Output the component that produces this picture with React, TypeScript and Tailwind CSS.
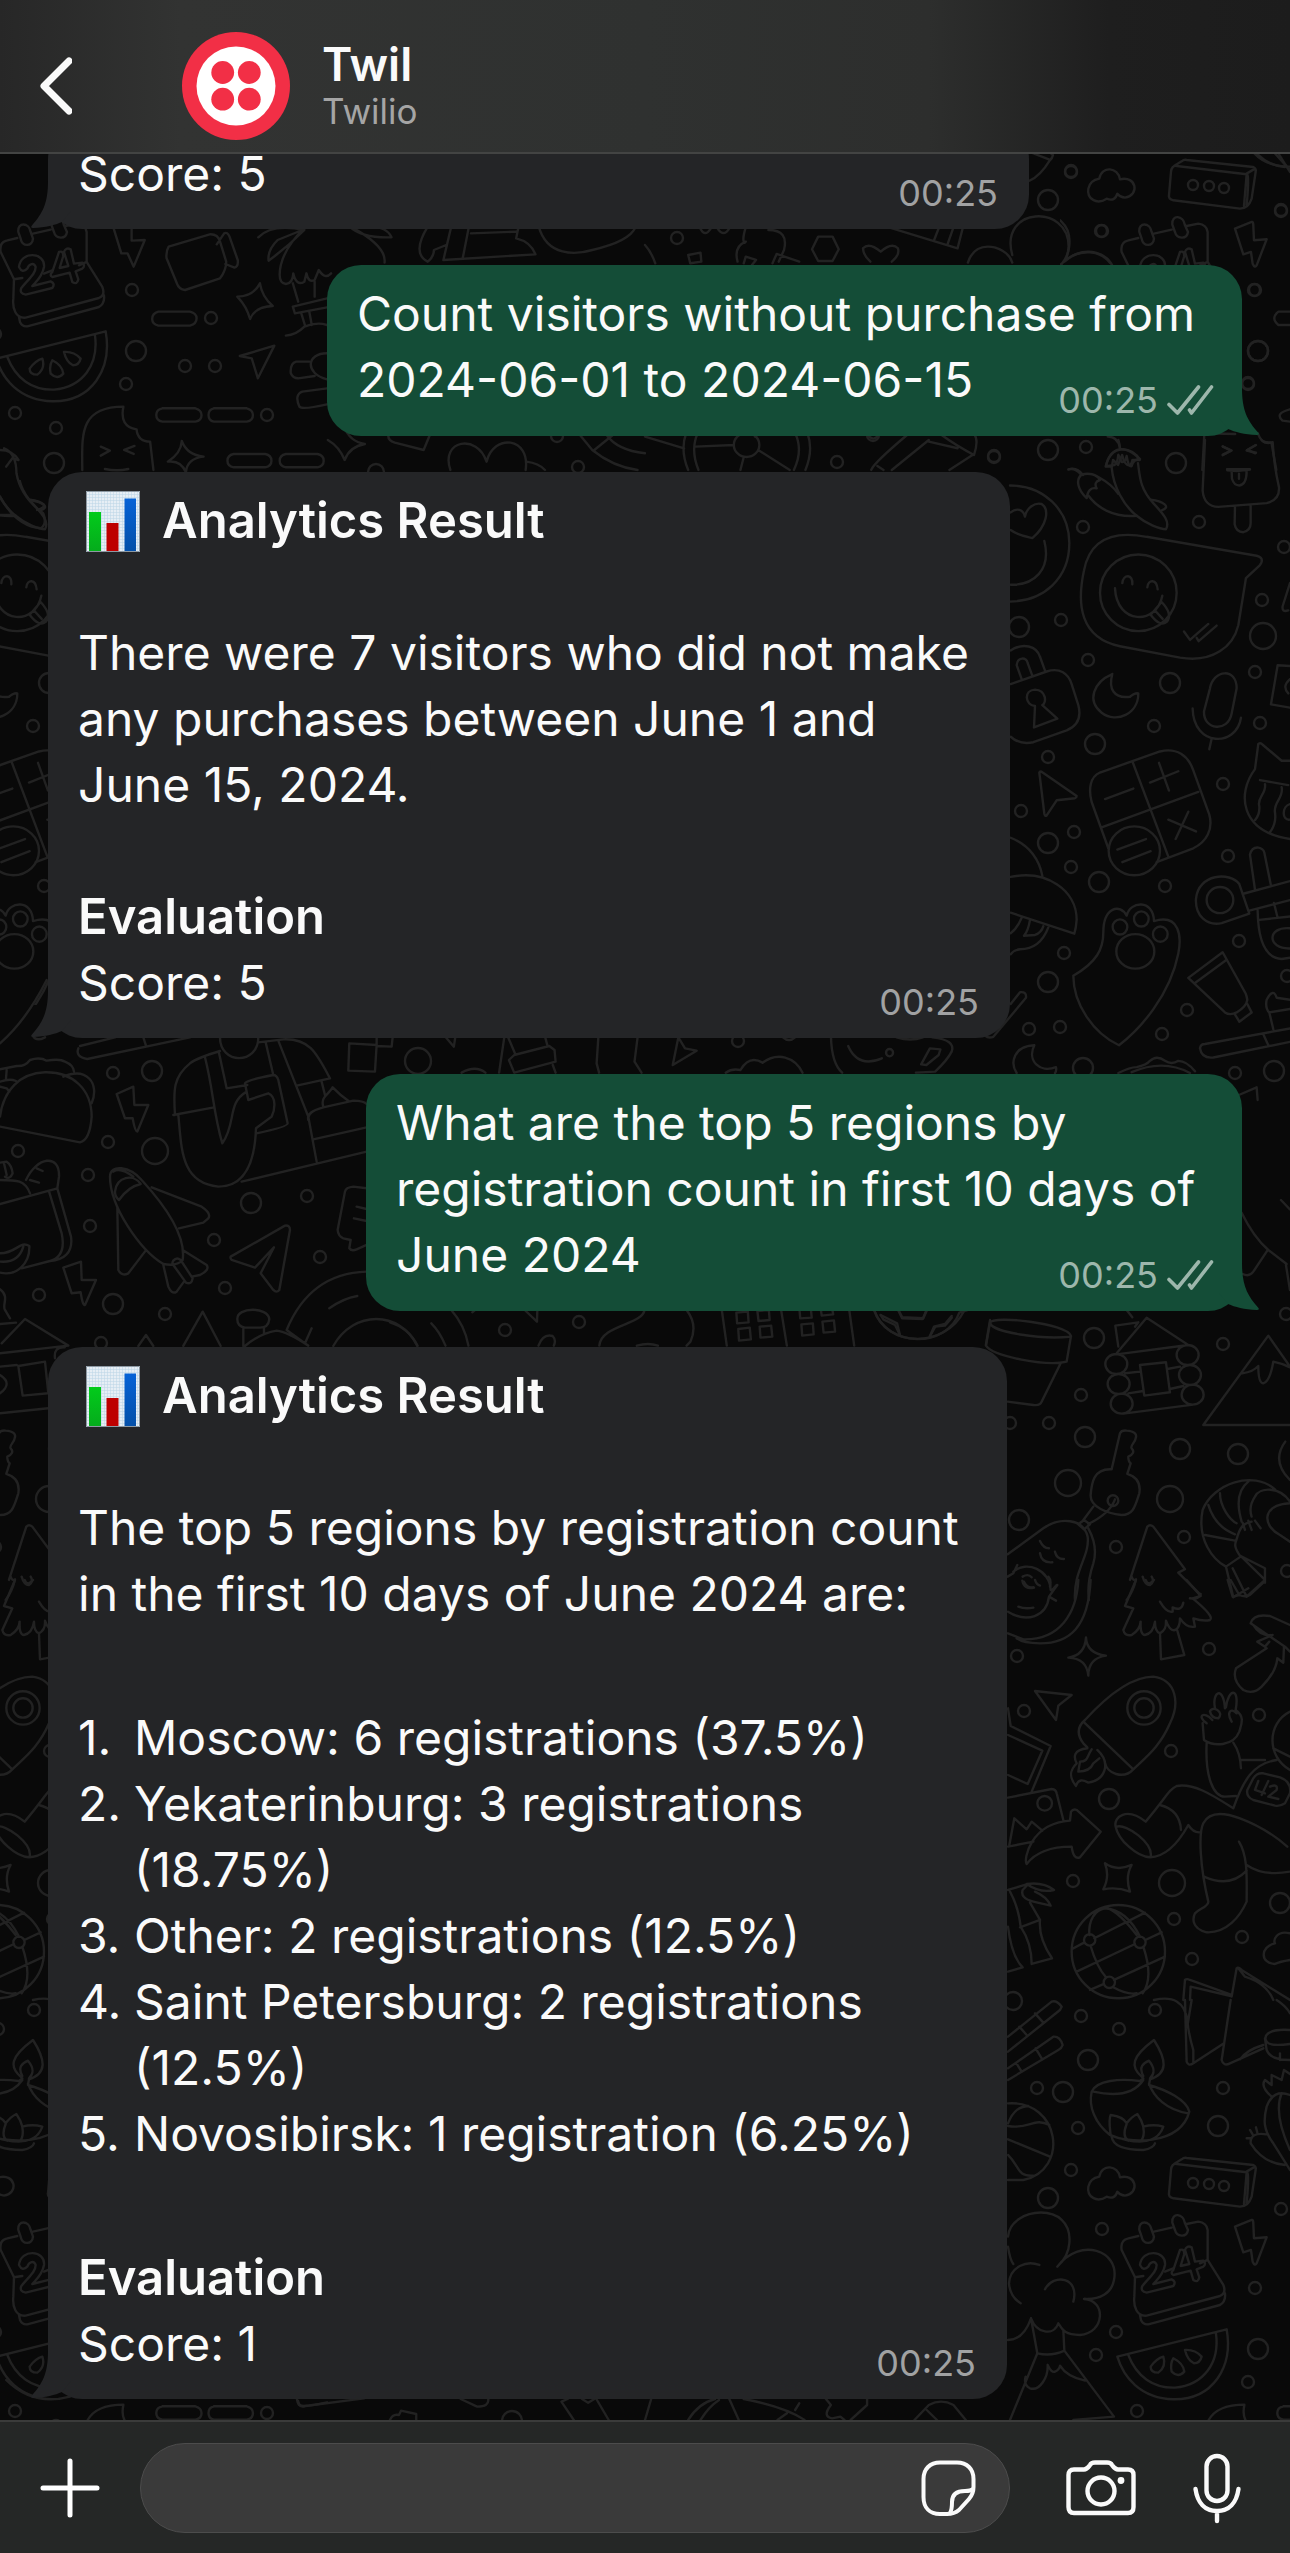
import type { ReactNode } from "react";

type Spot = [number, number, number];

/* ---------- wallpaper ---------- */

const S = "translate(";
const dots: Spot[] = [
  // upper right
  [994, 457, 6], [1048, 450, 10], [1086, 447, 6], [1176, 463, 10], [1083, 527, 6], [1199, 522, 6],
  [1284, 547, 6], [1061, 620, 6], [1019, 627, 10], [1262, 600, 6], [1263, 636, 13], [1088, 660, 6],
  [1170, 683, 10], [1255, 672, 6], [1260, 723, 6], [1154, 726, 6], [1095, 744, 10], [1048, 757, 6],
  [1223, 784, 6], [1021, 811, 6], [1074, 832, 6], [1048, 843, 10], [1071, 867, 6], [1099, 882, 10],
  [1228, 856, 6], [1165, 886, 6], [1064, 953, 6], [1239, 941, 6], [1048, 982, 10], [1287, 976, 6],
  [1187, 1010, 6], [1060, 1027, 6], [1029, 1029, 6], [1162, 1034, 6], [1083, 1068, 10], [1235, 1073, 6],
  [1274, 1071, 10],
  // right, middle
  [1094, 1338, 10], [1081, 1395, 6], [1223, 1344, 6], [1049, 1423, 6], [1010, 1423, 6], [1085, 1437, 10],
  [1180, 1449, 10], [1238, 1454, 10], [1068, 1483, 13], [1170, 1499, 13], [1019, 1520, 10], [1116, 1547, 6],
  [1184, 1537, 6], [1287, 1571, 6], [1017, 1656, 6], [1209, 1649, 6], [1024, 1711, 6], [1259, 1715, 6],
  [1171, 1751, 6], [1109, 1799, 10], [1172, 1883, 13], [1073, 1881, 6], [1174, 1919, 6], [1280, 1903, 10],
  [1242, 1937, 6], [1192, 1959, 6], [1286, 1314, 6],
  // left band
  [113, 1073, 6], [152, 1071, 10], [108, 1142, 6], [155, 1151, 13], [18, 1151, 6], [88, 1175, 6],
  [90, 1226, 6], [251, 1203, 10], [307, 1196, 6], [214, 1240, 6], [320, 1257, 6], [39, 1295, 6],
  [113, 1304, 10], [165, 1314, 6], [225, 1288, 6], [101, 1343, 6], [418, 1061, 13],
  [505, 1330, 6], [579, 1322, 6], [738, 1041, 6], [789, 1032, 8],
  // top bands
  [132, 290, 6], [211, 318, 6], [136, 351, 10], [185, 366, 6], [215, 366, 6], [126, 384, 6], [15, 413, 6],
  [56, 428, 6], [267, 415, 6], [54, 463, 10], [578, 467, 6], [376, 472, 8], [557, 436, 6],
  [677, 238, 6], [837, 462, 6], [873, 435, 6], [994, 456, 6], [1254, 290, 6], [1258, 351, 10],
  [1248, 383, 6], [1281, 210, 6], [1048, 200, 10], [1071, 171, 6], [1101, 231, 6],
  [512, 2421, 10],
];

const lowerDots: Spot[] = [
  [1013, 2001, 9], [1081, 2016, 6], [1155, 2010, 6], [1119, 2029, 6], [1088, 2060, 10], [1037, 2088, 6],
  [1063, 2092, 10], [1223, 2088, 6], [1218, 2126, 10], [1078, 2128, 6], [1071, 2170, 6], [1048, 2198, 10],
  [1281, 2209, 6], [1102, 2229, 6], [1255, 2288, 6], [1116, 2332, 6], [1258, 2349, 10], [1096, 2355, 6],
  [1248, 2382, 6], [1137, 2411, 6], [1193, 2183, 5], [1209, 2184, 5], [1224, 2186, 5],
];

function Spots({ items }: { items: Spot[] }) {
  return (
    <>
      {items.map(([x, y, r], i) => (
        <circle key={i} cx={x} cy={y} r={r} />
      ))}
    </>
  );
}

function Lines({ t, d }: { t: string; d: string[] }) {
  return (
    <g transform={t}>
      {d.map((p, i) => (
        <path key={i} d={p} vectorEffect="non-scaling-stroke" />
      ))}
    </g>
  );
}

const upperRight = [
  "M90 108C190 108 268 165 268 245C268 330 190 383 90 384M92 172C110 160 130 165 135 182C140 160 165 148 185 152C210 165 200 205 157 233C130 228 110 225 92 214M193 240C215 310 160 345 92 344",
  "M415 0Q420 12 420 20M378 62C385 30 410 20 430 22C455 25 465 35 480 45Q460 45 455 62Q445 65 440 38Q435 55 425 52Q422 45 415 35Q412 60 400 60ZM395 65C400 110 430 155 470 180C500 200 540 212 558 212C570 195 555 180 520 150C480 115 480 90 474 55",
  "M265 70Q285 65 303 82M320 138C295 120 285 95 305 82C325 78 350 80 360 95Q340 100 350 115Q325 110 320 138M355 88Q395 105 415 128M325 132C350 160 400 185 470 180M512 142C550 145 575 160 545 167",
  "M675 0L668 120Q672 158 715 159L860 150Q900 142 897 112Q882 60 878 5Q855 8 845 0M765 157L764 200Q768 218 790 219Q812 215 812 198L812 153M728 15L755 25L728 36M828 12L800 25L828 30M742 72L770 74L810 70M755 74L756 92Q762 108 778 108Q800 105 800 74M777 80L777 92",
  "M500 230C400 215 330 235 312 310C290 390 300 470 420 490L600 517C700 530 760 490 775 440Q785 390 798 328L840 297Q855 280 830 275Z",
  "M590 363A115 91 0 1 1 360 363A115 91 0 1 1 590 363M427 340C430 318 460 318 457 343M502 350C505 330 530 330 533 355M405 352C410 440 530 440 547 370M512 415L545 385Q580 415 560 432Q540 445 512 415M525 405L548 425M612 455L630 475L685 437M650 470L656 478L710 441",
  "M92 500C130 480 170 490 180 515L195 548M125 568L110 535C112 515 140 515 143 530L157 560M92 580L200 550C240 540 265 555 275 580L295 630C305 660 290 680 260 690L160 718Q120 725 92 705M165 632C135 630 130 595 165 593C200 595 200 625 187 630L232 662L162 683Z",
  "M397 556C340 575 320 620 365 648C410 675 475 650 475 602Q465 600 450 610C400 615 385 590 397 556",
  "M690 590C700 545 770 540 770 590L755 650C745 695 670 690 672 645ZM638 638C640 730 770 730 783 660M695 710L688 735",
  "M178 790Q180 785 188 790L290 846Q290 850 285 851L230 856L200 892Q195 895 193 888Z",
  "M360 790L540 740C590 730 625 750 640 785L688 890C700 925 680 955 640 970L530 1003M385 970L335 860C325 830 330 800 360 790M458 765L565 990M367 920L655 836M375 853L460 828M510 814L595 787M537 767L567 833M565 902L648 930M625 883L587 948",
  "M540 976A77 58 0 1 1 386 976A77 58 0 1 1 540 976M412 973L498 948M427 1003L512 977",
  "M835 722L825 782C770 840 780 930 930 948M835 722Q842 718 848 724L905 762L930 762M840 808L925 820M855 818C860 840 830 850 838 870Q840 890 825 903M905 825C912 850 880 860 885 885Q890 910 870 932",
  "M930 865C905 870 905 905 930 902M930 340L908 395Q905 410 925 405M930 537L893 535L873 628L930 636M930 568Q905 585 925 602",
  "M92 945Q170 970 187 1035M92 1038C200 1020 290 1070 290 1140Q288 1160 283 1173L92 1123M125 1135Q112 1160 92 1172M150 1140Q145 1165 132 1178L165 1176Q185 1170 190 1155M205 1158Q180 1210 120 1210Q100 1212 92 1222",
  "M280 1273C350 1240 370 1210 370 1170C370 1110 420 1100 440 1130C450 1095 520 1090 522 1143C600 1125 605 1180 595 1220C570 1320 480 1400 417 1438C340 1410 280 1340 280 1273M442 1157A22 18 0 1 1 398 1157A22 18 0 1 1 442 1157M506 1138A22 18 0 1 1 462 1138A22 18 0 1 1 506 1138M563 1174A22 18 0 1 1 519 1174A22 18 0 1 1 563 1174M523 1215A57 41 0 1 1 409 1215A57 41 0 1 1 523 1215",
  "M808 1125L725 1148C680 1155 645 1130 648 1090C655 1030 750 1025 778 1055ZM760 1093A40 31 0 1 1 680 1093A40 31 0 1 1 760 1093M825 1068L810 985Q815 968 832 968Q850 970 853 980L872 1055M790 1078L930 1048M808 1118L930 1093M833 1118Q835 1230 905 1233L930 1230M838 1140L930 1132M882 1100L892 1132M930 1160C860 1155 860 1210 930 1208",
  "M728 1217L625 1278L735 1360Q750 1368 770 1360Q800 1345 802 1330Q800 1320 797 1315ZM645 1290L740 1235M802 1340L815 1360L778 1382L763 1362",
  "M660 1445Q662 1435 675 1435L930 1398M660 1445Q665 1470 700 1467L930 1430M850 1412L865 1438M880 1400L868 1360Q855 1350 860 1330Q880 1300 890 1325L930 1330M868 1360L930 1352",
  "M92 1340L120 1312Q140 1310 138 1325L40 1418Q25 1422 15 1415M163 1438C100 1440 90 1480 110 1504M163 1438C140 1475 180 1505 228 1490Q230 1500 225 1504M415 1504Q450 1490 470 1490Q500 1485 510 1475Q530 1460 555 1475Q575 1485 595 1475Q620 1475 645 1500M455 1502Q550 1470 630 1504M780 1555L830 1538L833 1568",
];

const rightMiddle = [
  "M1145 38Q1180 110 1225 150L1280 192M1263 0L1290 28M1222 152L1180 215Q1168 232 1148 222M1278 195L1290 270",
  "M378 437L390 368C400 345 620 370 633 408L620 485C560 500 400 470 378 437M392 372C400 395 540 420 633 410M602 490L545 605Q540 618 520 615L443 605M42 330C80 445 260 445 298 338M116 332L127 352L190 355L200 332M62 345L70 358L105 375L120 405M275 348L255 372L222 380L210 408M298 338L322 330",
  "M770 460L860 353L985 435L770 463M775 440L766 377L835 367L825 380M802 492A33 30 0 1 1 736 492A33 30 0 1 1 802 492M809 552A33 30 0 1 1 743 552A33 30 0 1 1 809 552M818 611A33 30 0 1 1 752 611A33 30 0 1 1 818 611M1016 465A33 30 0 1 1 950 465A33 30 0 1 1 1016 465M1023 525A33 30 0 1 1 957 525A33 30 0 1 1 1023 525M1031 584A33 30 0 1 1 965 584A33 30 0 1 1 1031 584M840 495L918 487L930 577L853 587ZM795 520L840 515M922 507L960 500M805 580L850 573M930 567L970 558M790 641L1000 614M800 330L817 352",
  "M1290 675H1030L1225 407L1290 500M1147 520Q1180 515 1195 498Q1195 550 1210 550Q1230 545 1240 485Q1265 490 1290 502M1276 725C1250 760 1250 800 1290 840",
  "M755 808L780 700Q785 690 800 692Q835 695 827 715C825 730 810 735 815 745C825 755 818 765 805 770Q805 785 812 790L802 822M755 808C700 805 695 850 692 885C690 920 740 940 785 945C820 945 825 920 838 880Q845 835 802 822M775 902A16 16 0 1 1 743 902A16 16 0 1 1 775 902M765 898Q750 940 685 972M700 920L670 960M655 973L672 960L690 973L672 988Z",
  "M443 1063L550 985C600 950 670 955 683 1010C690 1070 640 1110 645 1200M685 985Q715 1040 700 1090Q680 1150 687 1200M540 1023Q550 1045 567 1045M540 1060Q545 1090 577 1087M585 1055Q590 1078 612 1077M460 1115C500 1080 570 1110 572 1170M472 1095L460 1120L443 1130M488 1130Q505 1120 515 1132M487 1142Q492 1170 522 1163M525 1140Q530 1155 540 1157M575 1172L590 1155",
  "M810 1140L862 980Q870 972 880 980L975 1108L955 1118L1022 1185M815 1130Q820 1145 828 1138Q820 1175 800 1200M848 1130Q855 1155 870 1155Q885 1145 875 1130M1022 1182Q1015 1200 990 1195",
  "M1290 910C1200 915 1210 980 1260 1005L1290 1025M1245 868C1180 810 1060 850 1028 930C1010 1020 1060 1080 1098 1100L1142 1070C1120 1040 1125 1030 1130 1018C1140 980 1150 970 1175 965M1290 905C1260 860 1200 860 1185 890Q1165 920 1175 950M1165 845Q1120 880 1145 965M1080 880C1080 920 1110 960 1130 970M1045 915Q1065 980 1125 1003M1035 1005L1125 1022M1148 968L1155 990M1165 962L1175 990M1185 962L1202 985M1098 1100L1120 1192L1165 1165M1118 1105L1160 1190L1215 1140L1142 1068L1215 1105V1148",
];

const rightLower = [
  "M295 0C290 100 240 180 130 178L84 160M332 0C325 140 270 190 180 190Q130 190 110 175M84 95C140 130 200 110 207 50L228 62M207 50L232 15M210 20Q215 0 205 -10M115 80Q135 88 160 83M132 5Q140 25 160 22",
  "M468 0L435 78L460 85L430 150Q435 170 455 165Q480 150 482 125Q480 165 495 165Q520 160 525 125Q525 155 540 160Q560 150 558 122Q570 155 585 150Q600 145 600 115Q620 145 645 140L640 115Q670 125 690 120Q705 110 638 55L662 48L620 0M540 160L543 238L613 225L592 152M497 0Q505 20 522 0M540 65Q560 100 578 95L578 82Q605 95 610 68",
  "M743 0L758 50L778 45L752 0M778 45Q800 55 815 40L853 5",
  "M318 172Q320 220 378 227Q325 235 325 287Q320 235 265 233Q315 225 318 172ZM165 333L275 345L235 377L228 420Z",
  "M315 420C370 360 450 290 520 290C590 300 600 370 570 430C540 500 500 530 460 568C430 600 380 580 375 548M315 420Q280 450 310 490L322 502M310 425L460 568M542 384A50 50 0 1 1 442 384A50 50 0 1 1 542 384M521 384A29 29 0 1 1 463 384A29 29 0 1 1 521 384M322 505C280 510 280 530 290 550C270 570 265 590 288 618C295 595 310 600 325 608C375 600 395 550 352 510M335 508C320 530 325 545 300 545L295 575Q330 575 340 550L358 535",
  "M84 385L92 438L212 498L155 635M84 465L187 512L143 612L84 585M84 653L215 627Q228 628 230 640L250 720M84 800L160 785M88 795L103 715L140 748L155 725L187 752M216 670A22 22 0 1 1 172 670A22 22 0 1 1 216 670M140 852C130 840 150 730 270 722L273 695Q280 685 290 690L362 755L300 832Q280 840 275 800Q180 800 140 852",
  "M375 850Q410 875 455 855Q435 890 450 935Q410 920 370 928Q390 890 375 850M84 930L145 912L128 930Q120 955 160 965L212 977Q200 950 165 935M140 912Q190 905 222 930Q180 940 140 912M150 968L180 1020L120 1042M90 935Q115 980 122 1040Q155 1090 155 1152L216 1135Q175 1075 180 1020M84 1040Q95 1130 128 1162L84 1175",
  "M555 1115A140 140 0 1 1 275 1115A140 140 0 1 1 555 1115M328 1065C325 1020 345 990 375 985C440 990 470 1050 480 1070M490 1100C510 1160 510 1210 488 1240M332 1098Q350 1160 378 1192M400 1222Q440 1245 470 1240M275 1108L312 1088M343 1075L495 998M290 1175L465 1092M496 1080L545 1057M330 1230L372 1212M402 1200L555 1130M385 985Q420 1000 470 1065M346 1080A17 17 0 1 1 312 1080A17 17 0 1 1 346 1080M497 1087A17 17 0 1 1 463 1087A17 17 0 1 1 497 1087M405 1207A17 17 0 1 1 371 1207A17 17 0 1 1 405 1207",
  "M812 130Q820 100 870 108L930 135M812 130L915 200L930 215M820 135Q840 170 878 165L832 185L855 200L868 185M860 205L768 265Q755 300 790 330Q820 345 845 320C880 285 890 260 892 235L910 248L912 200",
  "M680 430C650 410 670 390 697 420M690 395C695 375 735 395 715 415Q695 415 690 395M705 385C695 335 730 315 735 385M738 382C745 325 780 320 767 390C795 410 785 430 778 455C760 500 700 500 672 480L668 430M755 425C740 400 750 380 770 400M680 490C675 590 700 650 735 650L768 648M760 488C775 510 782 540 783 565M785 540L855 540M930 395C860 430 860 530 930 570M880 505L930 530M760 685C790 600 820 550 890 540M760 685C690 640 640 610 590 618C565 630 560 650 497 725C440 680 400 710 407 740C415 780 470 830 510 832C560 830 600 780 625 735Q640 760 662 757M410 740C440 730 520 790 512 830M540 675Q600 690 603 750",
  "M685 965C660 860 655 760 670 730C690 690 740 700 780 715Q860 745 922 800M777 785C805 830 800 900 800 965C780 1010 740 1060 680 1057C630 1045 640 1010 645 1000C660 985 685 980 685 965M672 890Q750 925 800 872M800 855Q850 890 930 875M802 630L820 595Q830 578 850 580L900 592Q935 605 930 640L915 670Q900 680 885 677L820 660Q798 650 802 630M835 603L825 630L855 640M865 603L845 645M870 620Q895 610 890 630L865 650L895 657",
  "M930 1060C890 1050 880 1080 885 1090C840 1100 840 1150 885 1152Q900 1145 930 1140M610 1260L615 1200Q620 1195 630 1200L755 1245M630 1260L632 1220L752 1248M755 1250L770 1165Q775 1160 785 1170L930 1260M775 1165L795 1190Q860 1210 880 1260",
];

const rightBottom = [
  "M84 110L215 5Q230 0 245 20L240 30L84 155M118 80L140 105M165 40L190 68M84 205L220 110Q240 108 248 135Q245 145 235 150L84 240M108 188L125 215M167 145L185 175",
  "M84 310C240 300 270 510 130 540L84 540M84 370C100 330 120 320 145 318M84 378C150 390 160 350 208 375M84 418L210 470M84 465C120 500 110 530 160 527",
  "M335 275C350 240 420 235 480 243L490 235L485 230C450 200 455 170 522 120C560 180 565 220 510 238L507 255C560 270 620 300 628 335C600 440 440 430 390 405C345 370 325 320 335 275ZM340 275C430 295 470 270 490 240M507 250C520 290 560 330 625 340M490 228C475 200 490 190 507 182C530 210 520 225 510 235M392 405C390 385 385 360 392 345Q430 350 440 370Q455 350 472 342Q485 360 490 380Q520 372 550 380C540 410 510 435 440 420Q415 415 392 405M440 372Q425 410 445 422M490 382Q495 410 482 424M395 410Q400 450 490 450Q520 445 525 430",
  "M358 530C365 490 415 495 420 532C470 520 480 580 435 587Q420 585 412 575Q405 600 380 590C350 610 320 590 325 560Q330 535 358 530Z",
  "M582 492L605 478Q612 472 620 474L820 495Q830 500 827 510L815 590Q805 620 780 620L580 595Q565 592 567 580L573 510Q575 490 590 492L800 517L792 612M800 515L825 500M802 518Q808 525 800 610",
  "M84 710C90 620 280 600 268 730Q265 770 232 800C300 710 420 750 402 840C395 880 360 900 312 897C380 900 375 1000 300 1005C250 1005 245 985 235 970C220 1010 170 1000 153 955Q130 1020 84 1020M84 740Q90 780 100 792M178 795C140 780 90 800 87 850Q90 890 122 910M195 868C220 820 300 830 280 905M153 955L172 1060L90 1260M250 990L253 1052L402 1250L280 1260M172 1060Q215 1070 253 1052M203 1095C205 1130 180 1175 150 1165Q130 1155 137 1130M203 1095Q215 1120 225 1115Q238 1110 240 1097Q260 1130 315 1142",
  "M465 832L425 750Q420 720 445 715L475 708M522 695L575 683M620 672L655 665Q680 668 683 690L683 780L730 855Q740 880 720 888L500 947C470 950 460 920 463 890L465 832L490 828M555 815L580 805M660 790L683 780M480 945L483 960Q490 975 505 973L720 915Q738 905 735 880M478 690C475 660 510 660 515 690L522 710C520 735 490 735 485 710ZM577 668C575 635 610 640 615 670L624 690C620 715 590 710 585 690Z",
  "M480 795C485 745 560 750 555 795C550 825 530 840 520 852L575 838Q590 845 580 858L500 878Q480 875 487 858C510 830 530 815 530 795C525 780 510 785 505 800Q490 815 480 795M580 810L600 750Q615 745 612 765L602 798L628 792L615 750Q620 735 635 742L645 785L670 782Q680 792 670 800L650 808L658 832Q655 850 640 840L632 812L580 825Q570 820 580 810",
  "M765 680L815 660Q820 658 820 670L822 715L860 712L830 790Q825 800 818 785L813 750L790 757Z",
  "M412 1070L740 988C760 1100 700 1200 580 1198C480 1195 430 1130 412 1070M445 1065C470 1130 520 1165 585 1163C670 1155 720 1090 708 1000M512 1100Q530 1075 550 1070Q560 1100 535 1118Q512 1118 512 1100M575 1115Q570 1090 580 1075Q610 1090 613 1115Q595 1135 575 1115M615 1050Q645 1048 665 1070Q660 1090 642 1090Q622 1080 615 1050",
  "M522 0Q610 -20 622 60Q625 100 640 150V190M635 0L622 80M615 0L620 185Q625 200 640 190L732 130M752 0L725 180Q730 200 750 190L850 145M780 178Q800 150 850 135M890 0Q920 20 930 40M930 90C860 85 850 110 860 125Q870 140 930 132M855 115L860 150Q870 180 930 180M900 160V180M930 285Q880 265 860 320C850 360 850 390 880 430L930 510M905 280Q880 340 930 450M875 290Q840 260 855 240L875 255L875 225L905 240L912 210L930 222M860 403Q810 395 812 430Q850 490 915 495M800 415L812 415M810 390L818 403M828 382L832 398",
];

const leftBand = [
  "M140 0Q80 120 0 190M100 170Q110 185 135 172M235 205Q225 230 262 237L570 172M240 198L345 172M430 172L438 197",
  "M0 268Q30 262 50 258Q75 260 90 240Q120 230 140 242Q180 235 195 245Q220 255 222 275M18 295L20 270M0 440L240 487Q270 480 275 410C275 330 220 275 135 277C60 280 10 330 0 410M190 290C260 260 300 310 275 370M0 305Q30 295 48 303M0 320L20 325L28 335",
  "M350 342L400 320L403 375L445 375L412 455Q405 455 398 415L375 415ZM190 863L243 845L245 900L288 900L255 975Q248 978 242 937L215 940Z",
  "M0 600C50 600 75 600 90 640M78 600C110 530 180 520 177 590L172 625M0 672L172 625L213 770C220 820 190 840 150 843L65 865M148 637L185 760C200 830 160 840 150 843M110 565L128 573M90 600L117 608M0 548L20 545Q35 555 38 580Q30 600 15 590M12 550L20 585M0 820C50 820 60 780 88 798C90 850 50 890 0 878M70 800Q55 850 0 845",
  "M330 590C330 550 390 560 425 600C480 660 560 760 548 840Q530 860 490 852C420 810 330 680 330 590M345 635C350 590 400 580 422 612Q385 620 357 660Q345 650 345 635M340 575Q360 560 400 590M455 622L605 680Q635 700 625 715L610 728L537 745M352 680L355 870Q365 890 385 880L437 812M548 810L620 855Q630 870 600 885L575 890M490 855L505 920Q515 945 530 935L552 905M520 842Q530 830 542 840L578 895Q575 915 558 908L520 855Q515 850 520 842",
  "M520 405L642 382M525 405C520 330 520 290 570 250C590 235 620 225 660 213M660 172C660 255 775 255 775 172M775 187L850 178C930 175 950 220 990 295L890 317M615 232C640 330 640 400 667 490C710 430 680 370 740 335M657 218L680 325L742 315M797 187L820 285M735 310Q740 300 820 285Q830 285 835 300L863 430Q865 440 770 460M735 310L745 360Q790 345 805 340C830 350 825 390 815 410L768 445C765 540 740 620 655 620C540 610 545 500 535 405M835 182L925 410L950 545M725 605L1100 515M965 305L975 345M940 478L1100 442M925 420C920 400 940 390 970 382L1060 362Q1090 362 1100 372M970 380C960 350 990 340 998 322Q1020 345 1045 362",
  "M692 830L855 737Q870 735 870 750L838 930Q830 940 820 930L782 880L822 802L765 863L695 840Q690 835 692 830M1100 625L1060 620Q1038 622 1035 635L1013 750Q1015 770 1030 775L1052 780L1048 805Q1055 815 1070 808L1100 795M1070 680L1100 687M1062 715L1100 723",
  "M0 928C30 950 5 975 15 990L30 1015M0 1032L48 1028M5 1090L75 1017L205 1097L0 1120M0 1160L50 1155M0 1185Q40 1210 0 1240M55 1158L135 1145L145 1240L68 1247ZM0 1300L145 1285M165 1135Q160 1100 195 1102",
  "M415 1098L438 1065L460 1098M550 1098L608 995L662 1098M730 1098V1045M792 1062V1045M712 1018C710 980 805 980 808 1018Q805 1043 780 1043H735Q712 1040 712 1018M735 1098Q780 1060 830 1052Q860 1055 925 1097L860 1050Q930 880 1100 875M915 1090L935 1045M988 985Q1030 955 1072 948M1000 1098C1060 990 1200 990 1252 1098",
  "M1048 190L1130 195L1125 275L1045 272ZM1130 172V198L1175 200L1178 172",
];

const lowerCenterBand = [
  "M45 22L68 50L72 22M212 20L197 128M222 20L243 72M328 20L335 48M225 90L240 75L340 48L355 60L358 95L240 128ZM350 105L358 128M90 128Q130 105 158 128M480 20L475 100L482 128M592 20L583 95L603 128M708 22L692 105L760 62L727 55ZM843 128Q860 115 885 120Q910 75 948 98C990 65 1040 80 1062 128",
  "M1143 20Q1145 100 1175 128M1192 48Q1220 115 1288 85M1330 22Q1370 35 1405 22M1432 22Q1500 30 1487 65Q1475 90 1440 125L1385 128M1425 55L1455 58L1450 75L1415 105L1400 103ZM1320 68A10 11 0 1 1 1300 68A10 11 0 1 1 1320 68",
];

const midCenterBand = [
  "M0 52Q50 70 72 122M108 55Q130 80 145 122M160 15Q195 60 205 122M215 22L222 15M352 15L384 50L385 15M388 122Q400 85 425 93Q435 105 428 122M665 15C660 60 550 60 547 122M775 15Q805 60 785 110L775 122M645 122Q675 112 700 122",
  "M867 15L880 122M1022 15L1037 122M1200 15L1213 122M905 23L935 20L937 52L907 55ZM960 18L990 15L992 45L963 48ZM910 72L940 68L943 103L912 107ZM966 65L996 62L999 95L968 98ZM1070 15L1072 40L1102 38L1100 15M1126 15L1128 32L1158 28L1156 15M1075 58L1105 55L1107 88L1077 92ZM1130 50L1160 46L1163 80L1133 83Z",
  "M1265 15C1300 130 1450 130 1500 18M1328 15L1338 40L1392 42L1402 15M1282 30L1325 55L1332 88M1468 38L1450 62L1425 65L1410 95M1568 45L1557 120",
];

const topLeft = [
  "M410 80L510 43Q530 42 535 65L550 125Q550 150 535 175L450 210Q435 208 430 190L405 115Q403 95 410 80M527 73L545 40Q553 35 558 50L578 120Q580 140 570 143L548 132",
  "M275 20L295 100L310 100L325 140L352 60L320 62L320 20M632 190Q637 230 663 258Q620 260 608 297Q600 260 577 230Q615 230 632 190M442 663Q455 705 495 710Q455 715 452 757Q440 720 408 725Q440 700 442 663M837 620Q850 665 887 672Q850 680 838 720Q825 680 797 660",
  "M385 275H462Q478 280 478 295Q478 312 462 317H385Q370 312 370 297Q370 280 385 275M395 565H475Q490 570 490 585Q490 602 475 605H395Q380 602 380 585Q380 568 395 565M520 565H600Q615 570 615 585Q615 602 600 605H520Q507 602 507 585Q507 568 520 565M568 702H645Q660 706 660 722Q660 738 645 742H568Q553 738 553 722Q553 706 568 702M695 702H772Q787 706 787 722Q787 738 772 742H695Q680 738 680 722Q680 706 695 702",
  "M583 408L667 377L627 475L612 415ZM200 750C200 650 190 560 300 560Q290 620 332 628Q335 665 365 665L373 750M245 680L267 692L245 707M327 678L302 690L325 702M255 747Q285 755 312 747",
  "M628 52Q660 10 740 30Q700 80 653 122Q650 90 675 60L735 30Q680 100 680 165Q680 190 695 192Q712 190 713 160Q720 200 740 185L745 160Q750 190 765 180L775 150Q790 180 805 160M850 20Q880 55 952 52Q940 20 900 20M860 25Q940 80 935 128M712 190L725 245M765 185V230M795 235L712 260L717 280L795 262M732 278L742 318M752 275L758 315M695 347Q720 345 740 320Q770 305 795 315M795 400C745 400 740 460 795 478M752 425L720 425Q705 430 707 460Q712 475 725 475L765 468M795 505L735 515Q715 525 728 560Q735 570 795 553",
  "M0 690Q30 690 45 720L30 715L15 740M10 685Q40 700 40 760Q50 830 105 880Q115 910 100 925Q40 920 0 830M75 840Q130 855 90 870M0 885L25 885",
  "M1040 20Q1000 100 1040 125Q1055 110 1055 90L1085 75M1097 20L1078 120L1302 103Q1290 65 1255 55L1260 25M1140 20L1125 115M1145 40L1255 35M1310 20C1330 110 1400 105 1440 90Q1530 65 1545 22M945 640Q940 660 960 668L1030 690L1045 645M1095 750C1070 660 1160 640 1183 725C1200 640 1290 650 1278 750M1280 725Q1310 730 1325 750M1410 645L1440 690Q1490 740 1550 750M1445 690Q1490 645 1490 645M1475 645Q1500 690 1568 700",
];

const topRight = [
  "M0 735Q15 755 25 790M105 765L135 758L137 785L110 790ZM245 682C235 720 240 735 245 725Q215 740 225 785M300 690Q350 690 338 750L325 785M240 790L245 770L270 780L260 795M310 790L320 762L375 785M133 682Q145 715 160 685M175 682Q190 715 205 685M421 710H456L471 748L456 783H421L406 748ZM530 745Q545 725 573 755Q600 725 615 745Q620 765 600 785M530 745Q530 765 548 785",
  "M593 682L760 745L773 682M715 682L703 720M750 682L735 735M785 788Q800 730 850 742Q885 755 893 788M893 765C860 620 1030 610 1030 740Q1028 770 1020 785C1060 740 1110 755 1130 788M940 458L985 480Q960 530 935 542M985 458L992 465Q990 475 985 480M1480 458Q1510 500 1568 500M1530 458L1568 510",
  "M0 1310L95 1345M100 1300Q85 1350 105 1410M128 1300Q110 1350 130 1410M365 1300Q385 1350 362 1410M395 1300Q410 1350 390 1410M278 1335A31 36 0 1 1 216 1335A31 36 0 1 1 278 1335M122 1340L216 1335M240 1372L232 1410M275 1350L352 1410M268 1310L278 1300M550 1410Q555 1390 640 1302M565 1398L580 1410M715 1300Q760 1340 800 1365Q812 1320 800 1302M800 1362L740 1410M690 1325L760 1345M600 1410L690 1320M540 1302Q555 1330 570 1302",
  "M1360 1300L1355 1410M1435 1302L1360 1300M1490 1300Q1500 1335 1523 1328L1535 1410M1405 1340L1425 1352L1405 1364M1484 1336L1464 1350L1484 1360M1415 1408L1470 1408M1568 935H1540Q1520 955 1540 975H1568M1568 1228Q1530 1240 1550 1262L1568 1265M1125 1310Q1150 1310 1155 1345M1120 1400Q1130 1350 1160 1348Q1190 1350 1203 1380L1185 1380Q1180 1410 1165 1385L1160 1365L1150 1395L1138 1380L1135 1400ZM1030 1408Q1050 1400 1065 1425",
];

const footEdge = [
  "M722 57Q725 85 742 78L885 55M1120 57L1160 80Q1190 80 1187 57M948 120Q955 100 970 105L975 92L1012 102V120M1395 120L1365 65L1380 57M1480 120L1450 57M1415 57L1430 68L1445 57M15 0Q80 80 170 50",
];

const footEdgeRight = [
  "M0 120L15 57M105 120Q130 70 170 57M135 120Q155 80 180 60M205 57L228 120M240 57Q340 80 388 120M345 100L322 120M375 70L365 90M440 57L452 75Q430 110 455 115L475 110L485 120M540 57V75L500 120M655 120L690 75Q720 55 750 75L780 120M685 90L710 120",
];

function Wallpaper() {
  return (
    <svg
      aria-hidden="true"
      viewBox="0 154 1290 2266"
      preserveAspectRatio="xMidYMin slice"
      className="absolute inset-0 h-full w-full"
      fill="none"
      stroke="#222222"
      strokeWidth="2.4"
      strokeLinecap="round"
      strokeLinejoin="round"
    >
      <defs>
        <clipPath id="left-edge">
          <rect x="0" y="480" width="60" height="525" />
          <rect x="0" y="1420" width="60" height="980" />
        </clipPath>
        <clipPath id="top-right">
          <rect x="1060" y="150" width="230" height="290" />
        </clipPath>
        <clipPath id="top-left">
          <rect x="0" y="215" width="110" height="190" />
        </clipPath>
        <clipPath id="bottom-edge">
          <rect x="0" y="2400" width="1290" height="20" />
        </clipPath>
        <g id="lower-right">
          <Lines t={S + "980 2000) scale(0.3333)"} d={rightBottom} />
          <Spots items={lowerDots} />
        </g>
        <g id="right-column">
          <Lines t={S + "980 440) scale(0.3333 0.4209)"} d={upperRight} />
          <Lines t={S + "860 1200) scale(0.3333)"} d={rightMiddle} />
          <Lines t={S + "980 1580) scale(0.3333)"} d={rightLower} />
        </g>
        <g id="top-doodles">
          <Lines t={S + "0 220) scale(0.4113 0.3333)"} d={topLeft} />
        </g>
        <g id="dots">
          <Spots items={dots} />
        </g>
      </defs>
      <use href="#right-column" />
      <use href="#lower-right" />
      <use href="#top-doodles" />
      <use href="#dots" />
      <Lines t={S + "645 0) scale(0.4113 0.3333)"} d={topRight} />
      <Lines t={S + "0 980) scale(0.3333)"} d={leftBand} />
      <Lines t={S + "430 1030) scale(0.3508 0.3333)"} d={lowerCenterBand} />
      <Lines t={S + "390 1305) scale(0.3827 0.3333)"} d={midCenterBand} />
      <Lines t={S + "0 2380) scale(0.4113 0.3333)"} d={footEdge} />
      <Lines t={S + "645 2380) scale(0.4113 0.3333)"} d={footEdgeRight} />
      <g clipPath="url(#left-edge)">
        <g transform="translate(-1121 0)">
          <use href="#right-column" />
          <use href="#lower-right" />
          <use href="#dots" />
        </g>
      </g>
      <g clipPath="url(#top-right)">
        <use href="#lower-right" transform="translate(0 -1998)" />
      </g>
      <g clipPath="url(#top-left)">
        <use href="#lower-right" transform="translate(-1121 -1998)" />
      </g>
      <g clipPath="url(#bottom-edge)">
        <use href="#top-doodles" transform="translate(0 1998)" />
        <use href="#top-doodles" transform="translate(1121 1998)" />
        <use href="#dots" transform="translate(0 1998)" />
      </g>
    </svg>
  );
}

/* ---------- icons ---------- */

function TwilioLogo() {
  return (
    <svg viewBox="0 0 108 108" className="size-27 shrink-0" role="img" aria-label="Twilio logo">
      <circle cx="54" cy="54" r="54" fill="#f22f46" />
      <circle cx="54" cy="54" r="39.5" fill="#ffffff" />
      <g fill="#f22f46">
        <circle cx="40.7" cy="40.5" r="11.4" />
        <circle cx="67.3" cy="40.5" r="11.4" />
        <circle cx="40.7" cy="67.2" r="11.4" />
        <circle cx="67.3" cy="67.2" r="11.4" />
      </g>
    </svg>
  );
}

function ChartEmoji() {
  return (
    <svg viewBox="0 0 54 61" className="h-[61px] w-[54px]" role="img" aria-label="Bar chart">
      <defs>
        <pattern id="grid" width="3" height="3" patternUnits="userSpaceOnUse">
          <path d="M0 0H3M0 0V3" stroke="#b9d3e6" strokeWidth="1" />
        </pattern>
        <linearGradient id="green" x2="0" y2="1">
          <stop stopColor="#02cb1b" />
          <stop offset="1" stopColor="#05ab1c" />
        </linearGradient>
        <linearGradient id="blue" x2="0" y2="1">
          <stop stopColor="#0662d6" />
          <stop offset="1" stopColor="#0450a8" />
        </linearGradient>
      </defs>
      <path fill="#e6eef5" d="M0 0H54V61H0Z" />
      <path fill="url(#grid)" d="M0 0H54V61H0Z" />
      <path fill="url(#green)" d="M3 21H15V61H3Z" />
      <path fill="#bd0000" d="M20.500 32H32.500V61H20.500Z" />
      <path fill="url(#blue)" d="M38.500 7.500H50V61H38.500Z" />
      <path fill="none" stroke="#8d99a3" strokeWidth="1" d="M.5.5H53.500V60.500H.5Z" />
    </svg>
  );
}

function Ticks() {
  return (
    <svg viewBox="0 0 48 32" className="h-8 w-12" fill="none" stroke="currentColor" strokeWidth="3.6" strokeLinecap="round" strokeLinejoin="round" role="img" aria-label="Delivered">
      <path d="M3 20.500L11.500 29L32.500 3M23.500 26L25.500 29L45.500 3" />
    </svg>
  );
}

function Tail({ side }: { side: "left" | "right" }) {
  return (
    <svg
      aria-hidden="true"
      viewBox="0 0 40 48"
      fill="currentColor"
      className={
        side === "left"
          ? "absolute bottom-0 -left-[17px] h-12 w-10 text-[#242527]"
          : "absolute -right-[17px] bottom-0 h-12 w-10 -scale-x-100 text-[#144d37]"
      }
    >
      <path d="M17 0C17 22 12 32 0.500 45Q-0.500 47 2 47C15 46.500 24 44 31 41L40 30V0Z" />
    </svg>
  );
}

/* ---------- messages ---------- */

function Received({ width, time, children }: { width: string; time: string; children: ReactNode }) {
  return (
    <article className={`relative ml-12 self-start rounded-[34px] bg-[#242527] pt-4 pr-6 pb-[22px] pl-[30px] ${width}`}>
      {children}
      <time className="absolute right-[31px] bottom-3 text-[36px] leading-[48px] text-[#a1a2a3]">{time}</time>
      <Tail side="left" />
    </article>
  );
}

function Sent({ width, time, children }: { width: string; time: string; children: ReactNode }) {
  return (
    <article className={`relative mr-12 self-end rounded-[34px] bg-[#144d37] pt-4 pr-6 pb-[23px] pl-[30px] ${width}`}>
      <p>{children}</p>
      <div className="absolute right-7 bottom-3 flex items-center gap-2 text-[36px] leading-[48px] text-[#9db7ac]">
        <time>{time}</time>
        <Ticks />
      </div>
      <Tail side="right" />
    </article>
  );
}

function ResultHeading() {
  return (
    <h2 className="mb-[66px] flex items-center gap-[22px] pl-2 text-[49px] font-semibold">
      <ChartEmoji />
      Analytics Result
    </h2>
  );
}

function Evaluation({ score }: { score: number }) {
  return (
    <>
      <h3 className="text-[49px] font-semibold">Evaluation</h3>
      <p>Score: {score}</p>
    </>
  );
}

const regions = [
  "Moscow: 6 registrations (37.5%)",
  "Yekaterinburg: 3 registrations (18.75%)",
  "Other: 2 registrations (12.5%)",
  "Saint Petersburg: 2 registrations (12.5%)",
  "Novosibirsk: 1 registration (6.25%)",
];

export default function App() {
  return (
    <div className="flex h-screen flex-col bg-[#090909] font-['Inter',sans-serif] text-[48px] leading-[66px] text-[#fafafa]">
      <header className="z-10 flex h-[154px] shrink-0 items-center border-b-2 border-[#434443] bg-[linear-gradient(to_right,#272727,#323332_14%,#2f3130_50%,#2d2e2d_72%,#1e1e1e_86%,#1c1c1c)] pt-5 pl-10">
        <button type="button" aria-label="Back" className="mr-[110px]">
          <svg viewBox="0 0 32 58" className="h-[58px] w-8" fill="none" stroke="currentColor" strokeWidth="7" strokeLinecap="round" strokeLinejoin="round">
            <path d="M29 4L4 29L29 54" />
          </svg>
        </button>
        <TwilioLogo />
        <div className="ml-8">
          <h1 className="text-[46px] leading-[50px] font-semibold">Twil</h1>
          <p className="text-[35px] leading-[44px] text-[#a5a5a5]">Twilio</p>
        </div>
      </header>

      <main className="relative flex min-h-0 flex-1 flex-col justify-end gap-9 overflow-hidden pb-[21px]">
        <Wallpaper />
        <Received width="w-[981px]" time="00:25">
          <p>Score: 5</p>
        </Received>
        <Sent width="w-[915px]" time="00:25">
          Count visitors without purchase from 2024-06-01 to 2024-06-15
        </Sent>
        <Received width="w-[962px]" time="00:25">
          <ResultHeading />
          <p className="mb-[66px]">There were 7 visitors who did not make any purchases between June 1 and June 15, 2024.</p>
          <Evaluation score={5} />
        </Received>
        <Sent width="w-[876px]" time="00:25">
          What are the top 5 regions by registration count in first 10 days of June 2024
        </Sent>
        <Received width="w-[959px]" time="00:25">
          <ResultHeading />
          <p>The top 5 regions by registration count in the first 10 days of June 2024 are:</p>
          <ol className="my-[78px]">
            {regions.map((r, i) => (
              <li key={r} className="flex">
                <span className="w-14 shrink-0">{i + 1}.</span>
                <span className="flex-1">{r}</span>
              </li>
            ))}
          </ol>
          <Evaluation score={1} />
        </Received>
      </main>

      <footer className="z-10 flex h-[133px] shrink-0 items-center border-t-2 border-[#3a3b3a] bg-[#252726] pr-12 pl-10">
        <button type="button" aria-label="Attach" className="shrink-0">
          <svg viewBox="0 0 60 60" className="size-15" fill="none" stroke="#ffffff" strokeWidth="5" strokeLinecap="round">
            <path d="M30 3V57M3 30H57" />
          </svg>
        </button>
        <div className="ml-10 flex h-[90px] min-w-0 flex-1 items-center rounded-full border border-[#4c4c4c] bg-[#3a3a3a] pr-[33px] pl-9">
          <input type="text" aria-label="Message" className="min-w-0 flex-1 bg-transparent outline-none" />
          <button type="button" aria-label="Stickers" className="shrink-0">
            <svg viewBox="0 0 55 56" className="h-14 w-[55px]" fill="none" stroke="#fafafa" strokeWidth="4" strokeLinecap="round" strokeLinejoin="round">
              <path d="M19 2.500H36C46 2.500 52.500 9 52.500 19V27C52.500 32 51.500 35 48 39L38 50C34 53.500 31 54 26 54H19C9 54 2.500 48 2.500 37V19C2.500 9 9 2.500 19 2.500Z" />
              <path d="M52 29C50 31 47 31 44 31C35 31 31 35 31 42C31 47 31 50 29 53" />
            </svg>
          </button>
        </div>
        <button type="button" aria-label="Camera" className="ml-14 shrink-0">
          <svg viewBox="0 0 70 56" className="h-14 w-[70px]" fill="none" stroke="#fafafa" strokeWidth="4.400" strokeLinejoin="round">
            <path d="M8 9.500H18C21 9.500 22.500 7 24 5C25 3 26.500 2.500 29 2.500H41C43.500 2.500 45 3 46 5C47.500 7 49 9.500 52 9.500H62C66 9.500 67.500 11.500 67.500 15V47C67.500 51 66 53 62 53H8C4 53 2.500 51 2.500 47V15C2.500 11.500 4 9.500 8 9.500Z" />
            <circle cx="35" cy="31" r="13.500" />
            <circle cx="55" cy="20.500" r="3.400" fill="#fafafa" stroke="none" />
          </svg>
        </button>
        <button type="button" aria-label="Voice message" className="ml-14 shrink-0">
          <svg viewBox="0 0 50 72" className="h-[72px] w-[50px]" fill="none" stroke="#fafafa" strokeWidth="4.400" strokeLinecap="round">
            <rect x="14.500" y="4" width="21" height="45" rx="10.500" />
            <path d="M3.500 37C5.500 51 13 59 25 59S44.500 51 46.500 37M25 59V69" />
          </svg>
        </button>
      </footer>
    </div>
  );
}
